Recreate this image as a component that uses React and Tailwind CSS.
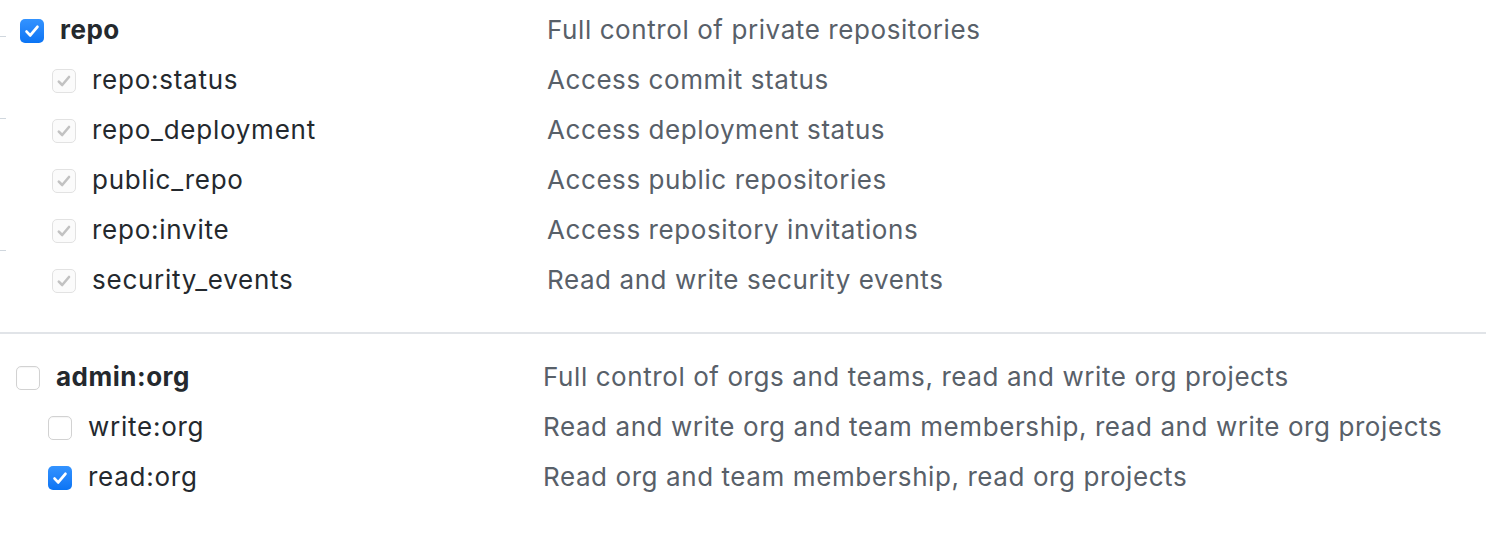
import React from 'react';

const sections = [
    {
        offset: 'pl-[20px]',
        parent: { name: 'repo', desc: 'Full control of private repositories', state: 'checked' },
        children: [
            { name: 'repo:status', desc: 'Access commit status', state: 'implied' },
            { name: 'repo_deployment', desc: 'Access deployment status', state: 'implied' },
            { name: 'public_repo', desc: 'Access public repositories', state: 'implied' },
            { name: 'repo:invite', desc: 'Access repository invitations', state: 'implied' },
            { name: 'security_events', desc: 'Read and write security events', state: 'implied' },
        ],
    },
    {
        offset: 'pl-[16px]',
        parent: { name: 'admin:org', desc: 'Full control of orgs and teams, read and write org projects', state: 'empty' },
        children: [
            { name: 'write:org', desc: 'Read and write org and team membership, read and write org projects', state: 'empty' },
            { name: 'read:org', desc: 'Read org and team membership, read org projects', state: 'checked' },
        ],
    },
];

function Box({ state }) {
    if (state === 'checked') {
        return (
            <span className="flex h-[24px] w-[24px] shrink-0 items-center justify-center rounded-[5px] bg-gradient-to-b from-[#3393ff] to-[#0a74f4]">
                <svg width="20" height="20" viewBox="0 0 20 20" fill="none">
                    <path d="M4.6 10.6 L8.2 14.4 L15.4 5.8" stroke="white" strokeWidth="2.8" strokeLinecap="round" strokeLinejoin="round" />
                </svg>
            </span>
        );
    }
    if (state === 'implied') {
        return (
            <span className="flex h-[24px] w-[24px] shrink-0 items-center justify-center rounded-[5px] border border-[#e2e2e2] bg-[#fbfbfb]">
                <svg width="20" height="20" viewBox="0 0 20 20" fill="none">
                    <path d="M4.8 10.6 L8.2 14 L15 6" stroke="#c2c2c2" strokeWidth="2.6" strokeLinecap="round" strokeLinejoin="round" />
                </svg>
            </span>
        );
    }
    return <span className="h-[24px] w-[24px] shrink-0 rounded-[5px] border border-[#d2d2d2] bg-white shadow-[inset_0_1px_1px_rgba(0,0,0,0.04)]" />;
}

function Row({ item, bold, indent }) {
    return (
        <div className="flex h-[50px] items-center">
            <div className={`flex w-[527px] shrink-0 items-center ${indent ? 'pl-[32px]' : ''}`}>
                <Box state={item.state} />
                <span className={`ml-[16px] pb-[3px] text-[26px] text-[#24292e] ${bold ? 'font-bold tracking-[0.5px]' : 'tracking-[0.75px]'}`}>{item.name}</span>
            </div>
            <span className="pb-[3px] text-[26px] tracking-[0.58px] text-[#586069]">{item.desc}</span>
        </div>
    );
}

export default function App() {
    return (
        <div className="relative h-[546px] w-[1490px] overflow-hidden bg-white pt-[6px] font-['Inter',sans-serif] leading-none">
            {/* bits of the tree guide, cut off at the left edge */}
            <div className="absolute left-0 top-[36px] h-px w-[6px] bg-[#d0d7de]" />
            <div className="absolute left-0 top-[118px] h-px w-[6px] bg-[#d0d7de]" />
            <div className="absolute left-0 top-[250px] h-px w-[6px] bg-[#d0d7de]" />

            <div className={sections[0].offset}>
                <Row item={sections[0].parent} bold />
                {sections[0].children.map((c) => (
                    <Row key={c.name} item={c} indent />
                ))}
            </div>

            <div className="mt-[26px] mb-[19px] mr-[4px] h-[2px] bg-[#e1e4e8]" />

            <div className={sections[1].offset}>
                <Row item={sections[1].parent} bold />
                {sections[1].children.map((c) => (
                    <Row key={c.name} item={c} indent />
                ))}
            </div>
        </div>
    );
}
